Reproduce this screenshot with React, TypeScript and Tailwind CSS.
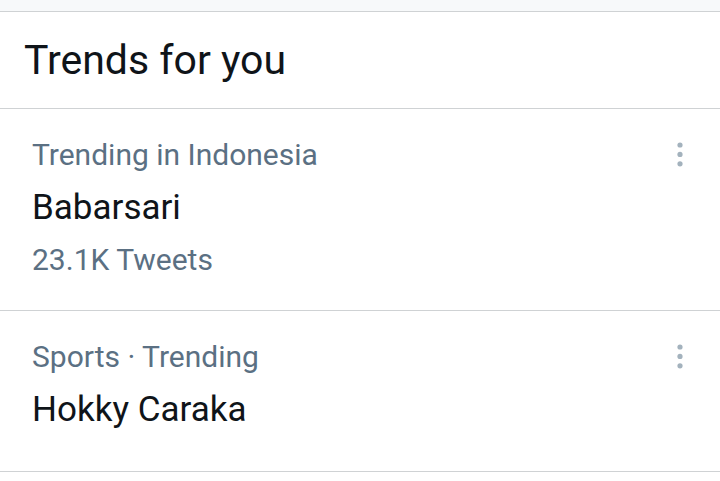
import React from 'react';

interface Trend {
    context: string;
    name: string;
    tweets?: string;
}

const trends: Trend[] = [
    { context: 'Trending in Indonesia', name: 'Babarsari', tweets: '23.1K Tweets' },
    { context: 'Sports · Trending', name: 'Hokky Caraka' },
];

const TrendItem: React.FC<{ trend: Trend }> = ({ trend }) => (
    <li className="flex min-h-[161px] items-start justify-between border-b border-[#cfd2d4] pt-5 pb-6 pl-8 pr-7">
        <div className="min-w-0">
            <p className="text-[30px] leading-[52px] text-[#5b7083]">{trend.context}</p>
            <h2 className="text-[35px] leading-[53px] text-[#0f1419]">{trend.name}</h2>
            {trend.tweets && (
                <p className="text-[30px] leading-[52px] text-[#5b7083]">{trend.tweets}</p>
            )}
        </div>
        <button
            type="button"
            aria-label={`More options for ${trend.name}`}
            className="mt-3 flex h-7 w-6 items-center justify-center text-[#a3b2bd]"
        >
            <svg width="6" height="26" viewBox="0 0 6 26" fill="currentColor" aria-hidden="true">
                <circle cx="3" cy="3" r="2.6" />
                <circle cx="3" cy="12.4" r="2.6" />
                <circle cx="3" cy="21.8" r="2.6" />
            </svg>
        </button>
    </li>
);

export default function App() {
    return (
        <main className="min-h-screen bg-white font-[Roboto,sans-serif]">
            <div className="h-3 border-b border-[#cfd2d4] bg-[#f7f9fa]" />
            <header className="border-b border-[#cfd2d4] px-6 py-6">
                <h1 className="text-[41px] leading-[48px] text-[#0f1419]">Trends for you</h1>
            </header>
            <ul>
                {trends.map(trend => (
                    <TrendItem key={trend.name} trend={trend} />
                ))}
            </ul>
        </main>
    );
}
